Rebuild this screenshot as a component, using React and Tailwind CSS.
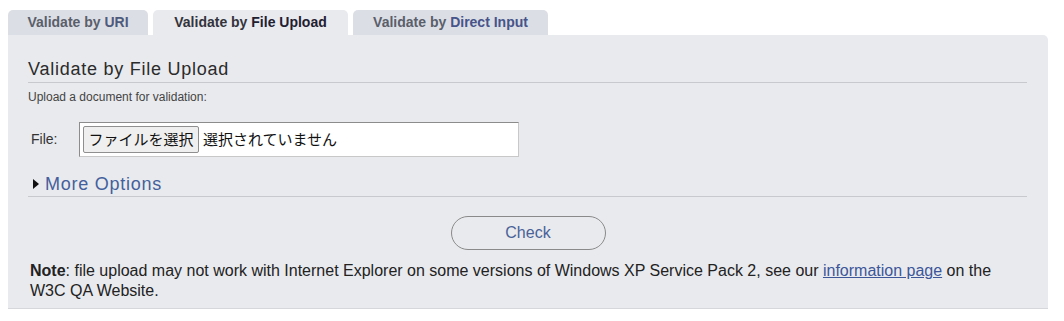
export default function App() {
  const font = "font-['Liberation_Sans',Arial,'Noto_Sans_CJK_JP',sans-serif]";
  return (
    <div className={`w-[1064px] h-[321px] bg-white pl-2 pt-[10px] ${font}`}>
      <div className="flex gap-[5px] h-[25px]">
        <div className="w-[140px] h-[25px] rounded-t-[5px] bg-[#dcdee5] flex items-center justify-center text-[14px] font-bold text-[#5a5f6b]">
          Validate by&nbsp;<span className="text-[#4e5a7c]">URI</span>
        </div>
        <div className="w-[195px] h-[25px] rounded-t-[5px] bg-[#e9eaee] flex items-center justify-center text-[14px] font-bold text-[#33343c]">
          Validate by&nbsp;<span className="text-[#1f2030]">File Upload</span>
        </div>
        <div className="w-[195px] h-[25px] rounded-t-[5px] bg-[#dcdee5] flex items-center justify-center text-[14px] font-bold text-[#5a5f6b]">
          Validate by&nbsp;<span className="text-[#46548a]">Direct Input</span>
        </div>
      </div>
      <div className="w-[1040px] bg-[#e9eaee] rounded-tr-[5px] border-b border-[#d6d7db] pl-[20px] pr-[21px] pt-[23px] pb-[7px]">
        <h2 className="text-[18px] leading-[22px] tracking-[0.75px] text-[#2b2b2b] pb-[2px] border-b border-[#c8c9ce]">
          Validate by File Upload
        </h2>
        <p className="mt-[7px] text-[12px] leading-[15px] text-[#444]">Upload a document for validation:</p>
        <div className="mt-[17px] flex items-center h-[35px]">
          <span className="ml-[3px] w-[48px] text-[14px] text-[#333]">File:</span>
          <div className="w-[440px] h-[35px] bg-white border border-t-[#8c8c8c] border-l-[#8c8c8c] border-r-[#c8c8c8] border-b-[#c8c8c8] flex items-center pl-[3px]">
            <div className="w-[116px] h-[27px] bg-[#efefef] border border-[#8f8f8f] rounded-[2px] flex items-center justify-center text-[15px] text-[#111] font-['Noto_Sans_CJK_JP',sans-serif]">
              ファイルを選択
            </div>
            <span className="ml-[4px] text-[15px] text-[#111] font-['Noto_Sans_CJK_JP',sans-serif]">選択されていません</span>
          </div>
        </div>
        <div className="mt-[16px] h-[24px] pb-[2px] border-b border-[#c8c9ce] flex items-center">
          <svg width="6" height="10" viewBox="0 0 6 10" className="ml-[5px] mr-[6px]">
            <path d="M0 0 L6 5 L0 10 Z" fill="#111" />
          </svg>
          <span className="text-[18px] leading-[22px] tracking-[0.75px] text-[#44609c]">More Options</span>
        </div>
        <div className="mt-[19px] flex justify-center">
          <div className="w-[155px] h-[34px] rounded-full border border-[#8a8a8a] flex items-center justify-center text-[16px] text-[#4a6298] ml-[1px]">
            Check
          </div>
        </div>
        <div className="mt-[11px] text-[16px] leading-[20px] text-[#222] ml-[2px]">
          <span className="font-bold">Note</span>: file upload may not work with Internet Explorer on some versions of Windows XP Service Pack 2, see our{" "}
          <span className="text-[#3c5699] underline">information page</span> on the W3C QA Website.
        </div>
      </div>
    </div>
  );
}
